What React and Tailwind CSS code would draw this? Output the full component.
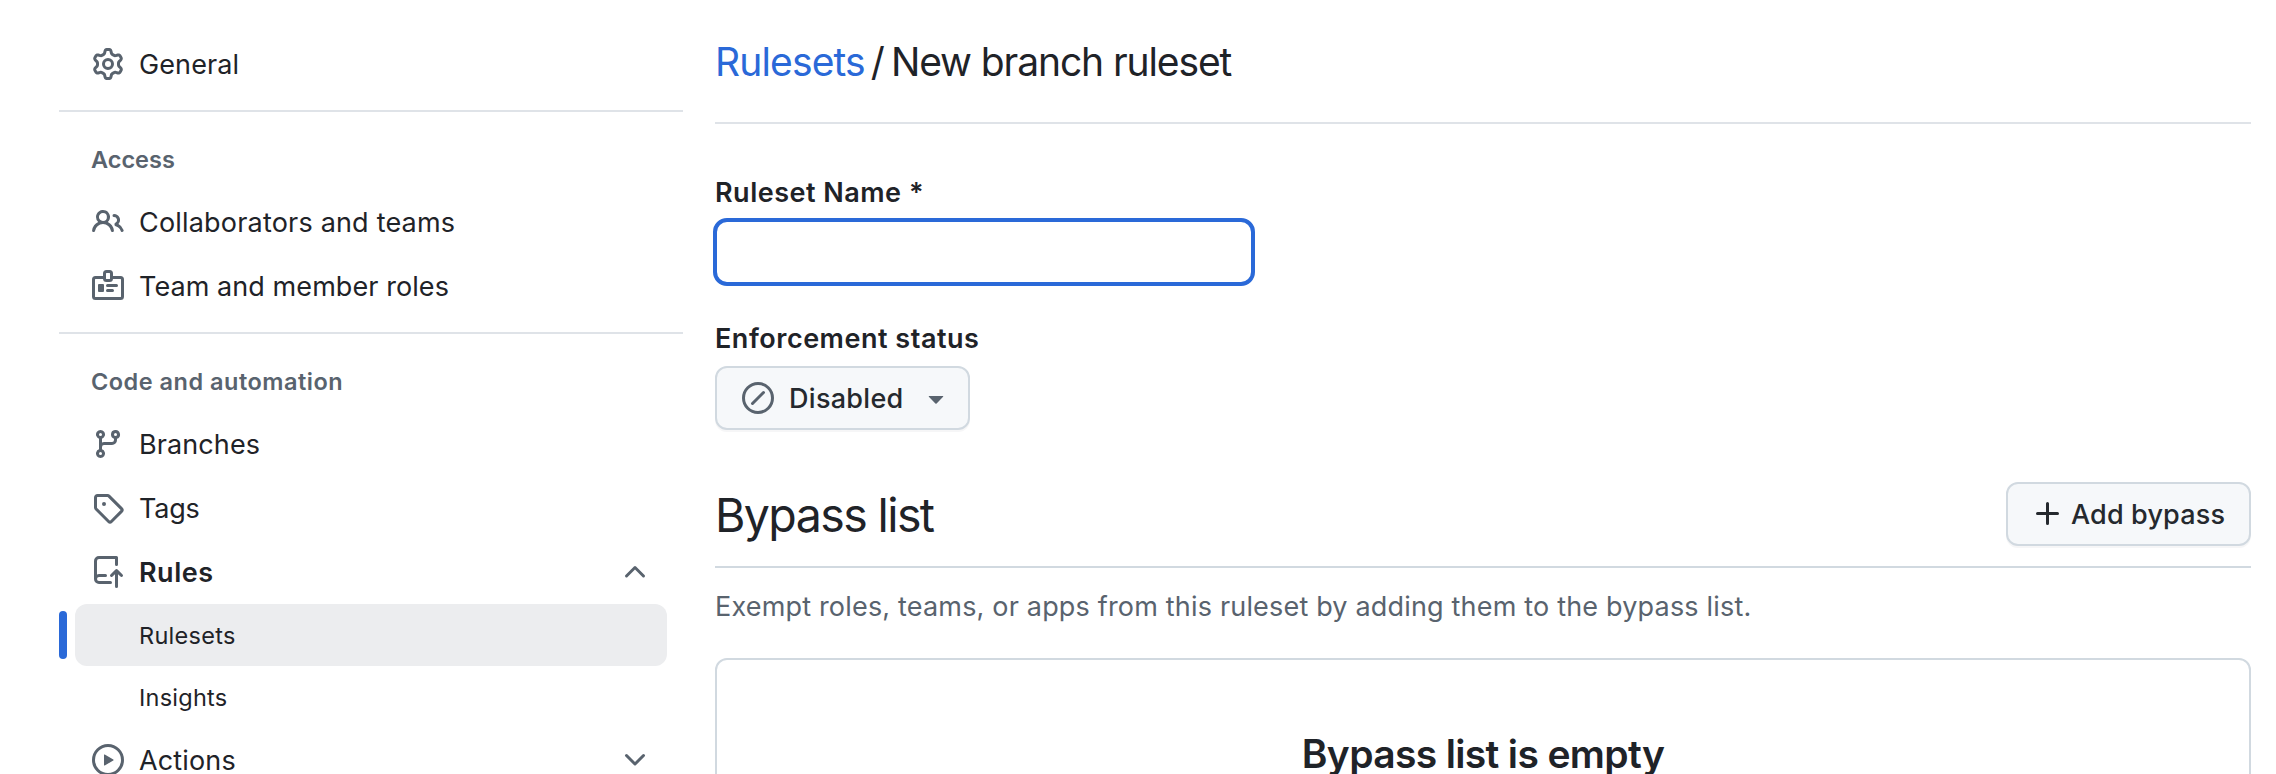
const PATHS = {
  gear: "M8 0a8.2 8.2 0 0 1 .701.031C9.444.095 9.99.645 10.16 1.29l.288 1.107c.018.066.079.158.212.224.231.114.454.243.668.386.123.082.233.09.299.071l1.103-.303c.644-.176 1.392.021 1.82.63.27.385.506.792.704 1.218.315.675.111 1.422-.364 1.891l-.814.806c-.049.048-.098.147-.088.294.016.257.016.515 0 .772-.01.147.038.246.088.294l.814.806c.475.469.679 1.216.364 1.891a7.977 7.977 0 0 1-.704 1.217c-.428.61-1.176.807-1.82.63l-1.102-.302c-.067-.019-.177-.011-.3.071a5.909 5.909 0 0 1-.668.386c-.133.066-.194.158-.211.224l-.29 1.106c-.168.646-.715 1.196-1.458 1.26a8.006 8.006 0 0 1-1.402 0c-.743-.064-1.289-.614-1.458-1.26l-.289-1.106c-.018-.066-.079-.158-.212-.224a5.738 5.738 0 0 1-.668-.386c-.123-.082-.233-.09-.299-.071l-1.103.303c-.644.176-1.392-.021-1.82-.63a8.12 8.12 0 0 1-.704-1.218c-.315-.675-.111-1.422.363-1.891l.815-.806c.05-.048.098-.147.088-.294a6.214 6.214 0 0 1 0-.772c.01-.147-.038-.246-.088-.294l-.815-.806C.635 6.045.431 5.298.746 4.623a7.92 7.92 0 0 1 .704-1.217c.428-.61 1.176-.807 1.82-.63l1.102.302c.067.019.177.011.3-.071.214-.143.437-.272.668-.386.133-.066.194-.158.211-.224l.29-1.106C6.009.645 6.556.095 7.299.03 7.53.01 7.764 0 8 0Zm-.571 1.525c-.036.003-.108.036-.137.146l-.289 1.105c-.147.561-.549.967-.998 1.189-.173.086-.34.183-.5.29-.417.278-.97.423-1.529.27l-1.103-.303c-.109-.03-.175.016-.195.045-.22.312-.412.644-.573.99-.014.031-.021.11.059.19l.815.806c.411.406.562.957.53 1.456a4.709 4.709 0 0 0 0 .582c.032.499-.119 1.05-.53 1.456l-.815.806c-.081.08-.073.159-.059.19.162.346.353.677.573.989.02.03.085.076.195.046l1.102-.303c.56-.153 1.113-.008 1.53.27.161.107.328.204.501.29.447.222.85.629.997 1.189l.289 1.105c.029.109.101.143.137.146a6.6 6.6 0 0 0 1.142 0c.036-.003.108-.036.137-.146l.289-1.105c.147-.561.549-.967.998-1.189.173-.086.34-.183.5-.29.417-.278.97-.423 1.529-.27l1.103.303c.109.029.175-.016.195-.045.22-.313.411-.644.573-.99.014-.031.021-.11-.059-.19l-.815-.806c-.411-.406-.562-.957-.53-1.456a4.709 4.709 0 0 0 0-.582c-.032-.499.119-1.05.53-1.456l.815-.806c.081-.08.073-.159.059-.19a6.464 6.464 0 0 0-.573-.989c-.02-.03-.085-.076-.195-.046l-1.102.303c-.56.153-1.113.008-1.53-.27a4.44 4.44 0 0 0-.501-.29c-.447-.222-.85-.629-.997-1.189l-.289-1.105c-.029-.11-.101-.143-.137-.146a6.6 6.6 0 0 0-1.142 0ZM11 8a3 3 0 1 1-6 0 3 3 0 0 1 6 0ZM9.5 8a1.5 1.5 0 1 0-3.001.001A1.5 1.5 0 0 0 9.5 8Z",
  people: "M2 5.5a3.5 3.5 0 1 1 5.898 2.549 5.508 5.508 0 0 1 3.034 4.084.75.75 0 1 1-1.482.235 4 4 0 0 0-7.9 0 .75.75 0 0 1-1.482-.236A5.507 5.507 0 0 1 3.102 8.05 3.493 3.493 0 0 1 2 5.5ZM11 4a3.001 3.001 0 0 1 2.22 5.018 5.01 5.01 0 0 1 2.56 3.012.749.749 0 0 1-.885.954.752.752 0 0 1-.549-.514 3.507 3.507 0 0 0-2.522-2.372.75.75 0 0 1-.574-.73v-.352a.75.75 0 0 1 .416-.672A1.5 1.5 0 0 0 11 5.5.75.75 0 0 1 11 4Zm-5.5-.5a2 2 0 1 0-.001 3.999A2 2 0 0 0 5.5 3.5Z",
  branch: "M9.5 3.25a2.25 2.25 0 1 1 3 2.122V6A2.5 2.5 0 0 1 10 8.5H6a1 1 0 0 0-1 1v1.128a2.251 2.251 0 1 1-1.5 0V5.372a2.25 2.25 0 1 1 1.5 0v1.836A2.493 2.493 0 0 1 6 7h4a1 1 0 0 0 1-1v-.628A2.25 2.25 0 0 1 9.5 3.25Zm-6 0a.75.75 0 1 0 1.5 0 .75.75 0 0 0-1.5 0Zm8.25-.75a.75.75 0 1 0 0 1.5.75.75 0 0 0 0-1.5ZM4.25 12a.75.75 0 1 0 0 1.5.75.75 0 0 0 0-1.5Z",
  tag: "M1 7.775V2.75C1 1.784 1.784 1 2.75 1h5.025c.464 0 .91.184 1.238.513l6.25 6.25a1.75 1.75 0 0 1 0 2.474l-5.026 5.026a1.75 1.75 0 0 1-2.474 0l-6.25-6.25A1.752 1.752 0 0 1 1 7.775Zm1.5 0c0 .066.026.13.073.177l6.25 6.25a.25.25 0 0 0 .354 0l5.025-5.025a.25.25 0 0 0 0-.354l-6.25-6.25a.25.25 0 0 0-.177-.073H2.75a.25.25 0 0 0-.25.25ZM6 5a1 1 0 1 1 0 2 1 1 0 0 1 0-2Z",
  push: "M1 2.5A2.5 2.5 0 0 1 3.5 0h8.75a.75.75 0 0 1 .75.75v3.5a.75.75 0 0 1-1.5 0V1.5h-8a1 1 0 0 0-1 1v6.708A2.493 2.493 0 0 1 3.5 9h3.25a.75.75 0 0 1 0 1.5H3.5a1 1 0 0 0 0 2h5.75a.75.75 0 0 1 0 1.5H3.5A2.5 2.5 0 0 1 1 11.5Zm13.23 7.79h-.001l-1.224-1.224v6.184a.75.75 0 0 1-1.5 0V9.066L10.28 10.29a.75.75 0 0 1-1.06-1.061l2.505-2.504a.75.75 0 0 1 1.06 0L15.29 9.23a.751.751 0 0 1-.018 1.042.751.751 0 0 1-1.042.018Z",
  play: "M8 0a8 8 0 1 1 0 16A8 8 0 0 1 8 0ZM1.5 8a6.5 6.5 0 1 0 13 0 6.5 6.5 0 0 0-13 0Zm4.879-2.773 4.264 2.559a.25.25 0 0 1 0 .428l-4.264 2.559A.25.25 0 0 1 6 10.559V5.442a.25.25 0 0 1 .379-.215Z",
  down: "M12.78 5.22a.749.749 0 0 1 0 1.06l-4.25 4.25a.749.749 0 0 1-1.06 0L3.22 6.28a.749.749 0 1 1 1.06-1.06L8 8.939l3.72-3.719a.749.749 0 0 1 1.06 0Z",
  up: "M3.22 10.53a.749.749 0 0 1 0-1.06l4.25-4.25a.749.749 0 0 1 1.06 0l4.25 4.25a.749.749 0 1 1-1.06 1.06L8 6.811 4.28 10.53a.749.749 0 0 1-1.06 0Z",
  plus: "M7.75 2a.75.75 0 0 1 .75.75V7h4.25a.75.75 0 0 1 0 1.5H8.5v4.25a.75.75 0 0 1-1.5 0V8.5H2.75a.75.75 0 0 1 0-1.5H7V2.75A.75.75 0 0 1 7.75 2Z",
  triangle: "m4.427 7.427 3.396 3.396a.25.25 0 0 0 .354 0l3.396-3.396A.25.25 0 0 0 11.396 7H4.604a.25.25 0 0 0-.177.427Z",
};

function Icon({ name, className = "text-[#59636e]" }) {
  return (
    <svg viewBox="0 0 16 16" fill="currentColor" className={`size-8 shrink-0 ${className}`}>
      <path d={PATHS[name]} />
    </svg>
  );
}

function BadgeIcon() {
  return (
    <svg viewBox="0 0 16 16" fill="none" stroke="currentColor" strokeWidth="1.5" strokeLinecap="round" className="size-8 shrink-0 text-[#59636e]">
      <path d="M6 3.75H1.75a1 1 0 0 0-1 1v8.5a1 1 0 0 0 1 1h12.5a1 1 0 0 0 1-1v-8.5a1 1 0 0 0-1-1H10" strokeLinecap="butt" />
      <rect x="6.25" y=".75" width="3.5" height="4.5" rx="1" />
      <path d="M7.75 7.75h4.5M7.75 10.25h2.5" />
      <rect x="3" y="7" width="3" height="4" rx=".5" fill="currentColor" stroke="none" />
    </svg>
  );
}

function SlashIcon() {
  return (
    <svg viewBox="0 0 16 16" fill="none" stroke="currentColor" strokeWidth="1.5" strokeLinecap="round" className="size-8 shrink-0 text-[#59636e]">
      <circle cx="8" cy="8" r="7.25" />
      <path d="m5.25 10.75 5.5-5.5" />
    </svg>
  );
}

function NavItem({ icon, label, trailing, labelClass }) {
  return (
    <a className="flex h-16 items-center pr-8 pl-[33px]">
      {icon}
      <span className={`ml-[15px] grow pt-[2px] text-[27px] ${labelClass}`}>{label}</span>
      {trailing}
    </a>
  );
}

function Sidebar() {
  return (
    <nav className="w-[624px] shrink-0 pt-8 whitespace-nowrap">
      <NavItem icon={<Icon name="gear" />} label="General" labelClass="tracking-[0.1px]" />
      <div className="mt-[14px] h-[2px] bg-[#dfe3e8]" />
      <h3 className="mt-[33px] h-[30px] pl-8 text-[23.5px] leading-[30px] font-semibold text-[#59636e]">Access</h3>
      <div className="mt-[15px]">
        <NavItem icon={<Icon name="people" />} label="Collaborators and teams" labelClass="tracking-[0.19px]" />
        <NavItem icon={<BadgeIcon />} label="Team and member roles" labelClass="tracking-[0.07px]" />
      </div>
      <div className="mt-[14px] h-[2px] bg-[#dfe3e8]" />
      <h3 className="mt-[33px] h-[30px] pl-8 text-[23.5px] leading-[30px] font-semibold tracking-[0.5px] text-[#59636e]">Code and automation</h3>
      <div className="mt-[15px]">
        <NavItem icon={<Icon name="branch" />} label="Branches" labelClass="tracking-[0.1px]" />
        <NavItem icon={<Icon name="tag" />} label="Tags" labelClass="tracking-[-0.2px]" />
        <NavItem icon={<Icon name="push" />} label="Rules" labelClass="font-semibold tracking-[0.5px]" trailing={<Icon name="up" />} />
      </div>
      <div className="flex items-center">
        <div className="h-12 w-2 rounded-full bg-[#2a69d8]" />
        <a className="ml-2 flex h-[62px] w-[592px] items-center rounded-xl bg-[#ecedef] pt-[2px] pl-16 text-[23.5px] tracking-[0.3px]">Rulesets</a>
      </div>
      <a className="ml-4 flex h-[62px] w-[592px] items-center pt-[2px] pl-16 text-[23.5px] tracking-[0.25px]">Insights</a>
      <NavItem icon={<Icon name="play" />} label="Actions" labelClass="tracking-[0.15px]" trailing={<Icon name="down" />} />
    </nav>
  );
}

const buttonClass =
  "flex h-16 shrink-0 items-center rounded-xl border-2 border-[#d1d9e0] bg-[#f6f8fa] text-[27px] font-medium text-[#25292e] shadow-[0_2px_0_rgba(31,35,40,0.04)]";

export default function App() {
  return (
    <div className="flex h-[774px] w-[2276px] overflow-hidden bg-white pl-[59px] font-['Inter',sans-serif] text-[#1f2328]">
      <Sidebar />
      <main className="ml-8 w-[1536px] shrink-0 whitespace-nowrap">
        <h1 className="flex h-[122px] items-center pt-[2px] text-[39px] leading-[60px]">
          <a className="tracking-[-0.85px] text-[#2a69d8]">Rulesets</a>
          <span className="ml-[6px]">/</span>
          <span className="ml-[6px] tracking-[-1.1px]">New branch ruleset</span>
        </h1>
        <div className="h-[2px] bg-[#dfe3e8]" />
        <label className="mt-[49px] block h-10 text-[27px] leading-10 font-semibold tracking-[0.5px]">Ruleset Name *</label>
        <input className="mt-[5px] -ml-[2px] block h-[68px] w-[542px] rounded-[14px] border-4 border-[#2a69d8] outline-none" />
        <label className="mt-[33px] block h-10 text-[27px] leading-10 font-semibold tracking-[0.52px]">Enforcement status</label>
        <button className={`mt-[7px] w-[255px] pl-[25px] ${buttonClass}`}>
          <SlashIcon />
          <span className="ml-[15px] w-[114px] pt-[2px] text-left tracking-[0.3px]">Disabled</span>
          <span className="ml-[17px]"><Icon name="triangle" /></span>
        </button>
        <div className="mt-[52px] flex h-[84px] items-start justify-between">
          <h2 className="h-16 text-[46.5px] leading-[66px] tracking-[-1.6px]">Bypass list</h2>
          <button className={`w-[245px] pl-6 ${buttonClass}`}>
            <Icon name="plus" className="text-[#25292e]" />
            <span className="ml-[7px] pt-[2px] tracking-[0.15px]">Add bypass</span>
          </button>
        </div>
        <div className="h-[2px] bg-[#d1d9e0]" />
        <p className="mt-[19px] h-10 text-[27px] leading-10 tracking-[0.18px] text-[#59636e]">
          Exempt roles, teams, or apps from this ruleset by adding them to the bypass list.
        </p>
        <section className="mt-[31px] h-[200px] rounded-xl border-2 border-[#d1d9e0] pt-[64px]">
          <h3 className="text-center text-[39px] leading-[60px] font-semibold tracking-[-0.65px]">Bypass list is empty</h3>
        </section>
      </main>
    </div>
  );
}
